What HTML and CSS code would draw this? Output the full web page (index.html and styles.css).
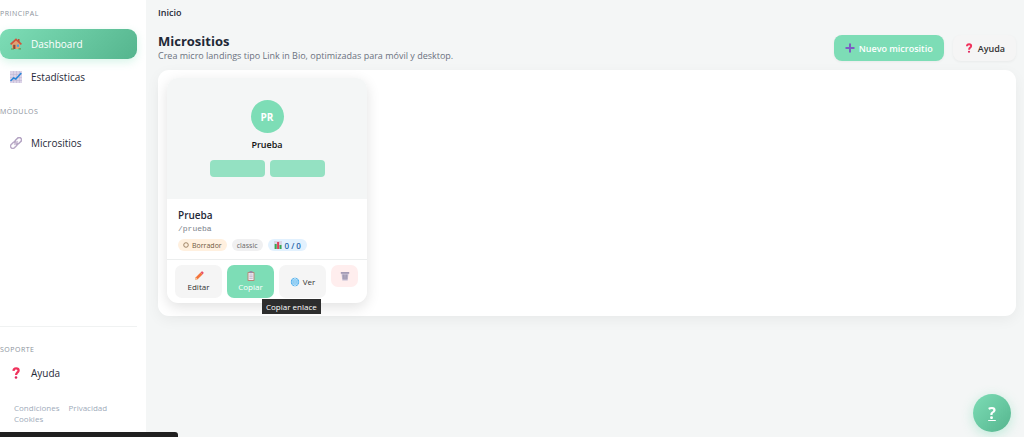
FILE: index.html
```html
<!DOCTYPE html>
<html lang="es">
<head>
    <meta charset="UTF-8">
    <meta name="viewport" content="width=device-width, initial-scale=1.0">
    <title>Micrositios</title>
    <link rel="stylesheet" href="styles.css">
</head>
<body>
    <svg class="sprite" aria-hidden="true">
        <symbol id="icon-question" viewBox="0 0 12 12">
            <path d="M3.500 3.900C3.600 2.100 4.700 1.400 6.100 1.400c1.500 0 2.500.8 2.500 2.100C8.600 5.500 6.100 5.500 6.100 8" fill="none" stroke="#f0325c" stroke-width="2.300"/>
            <circle cx="6" cy="10.500" r="1.300" fill="#e0245e"/>
        </symbol>
    </svg>

    <div class="layout">
        <aside class="sidebar">
            <nav class="nav-main">
                <p class="nav-title">PRINCIPAL</p>
                <a href="#" class="nav-item active">
                    <svg class="icon" viewBox="0 0 12 12" aria-hidden="true">
                        <path d="M2 5.500 6 2l4 3.500V11H2z" fill="#e0a372"/>
                        <path d="M8 1h1.500v3H8z" fill="#b5533c"/>
                        <path d="M.6 6.300 6 1.300l5.400 5" fill="none" stroke="#d2513a" stroke-width="1.600"/>
                        <path d="M3.200 6.800h2.200V11H3.200z" fill="#8a4b38"/>
                        <path d="M6.800 6.600h2.200v2.200H6.800z" fill="#3fa4e8"/>
                        <path d="M1 10.500h3v1H1zM8.500 10.200H11v1.300H8.500z" fill="#5c9e52"/>
                    </svg>
                    Dashboard
                </a>
                <a href="#" class="nav-item">
                    <svg class="icon" viewBox="0 0 12 12" aria-hidden="true">
                        <path d="M0 0h12v12H0z" fill="#dcd3e8"/>
                        <path d="M0 3.500h12M0 6.500h12M0 9.500h12M3.500 0v12M6.500 0v12M9.500 0v12" stroke="#bdb2d0" stroke-width=".5"/>
                        <path d="M.5 10 3.500 7l2.300 1L11.300 2" fill="none" stroke="#2886d8" stroke-width="1.500"/>
                    </svg>
                    Estadísticas
                </a>
                <p class="nav-title nav-title-modules">MÓDULOS</p>
                <a href="#" class="nav-item">
                    <svg class="icon" viewBox="0 0 12 12" aria-hidden="true">
                        <g fill="none" stroke-width="1.500" transform="rotate(-45 6 6)">
                            <rect x="-.8" y="3.700" width="7.500" height="4.600" rx="2.300" stroke="#b9a9c6"/>
                            <rect x="5.300" y="3.700" width="7.500" height="4.600" rx="2.300" stroke="#b3a3c2"/>
                            <path d="M3.500 6h5" stroke="#cdbfd6"/>
                        </g>
                    </svg>
                    Micrositios
                </a>
            </nav>
            <div class="nav-support">
                <p class="nav-title">SOPORTE</p>
                <a href="#" class="nav-item">
                    <svg class="icon" aria-hidden="true"><use href="#icon-question"/></svg>
                    Ayuda
                </a>
                <div class="legal">
                    <a href="#">Condiciones</a>
                    <a href="#">Privacidad</a>
                    <a href="#">Cookies</a>
                </div>
            </div>
        </aside>

        <main class="content">
            <div class="breadcrumb">Inicio</div>
            <header class="page-header">
                <div>
                    <h1>Micrositios</h1>
                    <p class="subtitle">Crea micro landings tipo Link in Bio, optimizadas para móvil y desktop.</p>
                </div>
                <div class="header-actions">
                    <button type="button" class="btn btn-primary">
                        <svg class="icon-sm" viewBox="0 0 10 10" aria-hidden="true">
                            <path d="M5 .5v9M.5 5h9" stroke="#7c5cc4" stroke-width="2"/>
                        </svg>
                        Nuevo micrositio
                    </button>
                    <button type="button" class="btn btn-light">
                        <svg class="icon-sm" aria-hidden="true"><use href="#icon-question"/></svg>
                        Ayuda
                    </button>
                </div>
            </header>

            <section class="panel">
                <article class="site-card">
                    <div class="preview">
                        <div class="avatar">PR</div>
                        <div class="preview-name">Prueba</div>
                        <div class="preview-links">
                            <span></span>
                            <span></span>
                        </div>
                    </div>
                    <div class="info">
                        <h2>Prueba</h2>
                        <div class="slug">/prueba</div>
                        <div class="badges">
                            <span class="badge badge-draft">
                                <svg class="icon-dot" viewBox="0 0 6 6" aria-hidden="true"><circle cx="3" cy="3" r="2.300" fill="none" stroke="#8a6d4d" stroke-width=".8"/></svg>
                                Borrador
                            </span>
                            <span class="badge badge-theme">classic</span>
                            <span class="badge badge-stats">
                                <svg class="icon-xs" viewBox="0 0 8 8" aria-hidden="true">
                                    <path d="M0 0h8v8H0z" fill="#d9d6e6"/>
                                    <path d="M.7 3h2v5h-2z" fill="#35a853"/>
                                    <path d="M3.100 1h2v7h-2z" fill="#e0405a"/>
                                    <path d="M5.500 4h2v4h-2z" fill="#35a853"/>
                                </svg>
                                0 / 0
                            </span>
                        </div>
                    </div>
                    <div class="actions">
                        <button type="button" class="action">
                            <svg class="icon-sm" viewBox="0 0 10 10" aria-hidden="true">
                                <path d="m1 9 .8-2.700L6.600 1.500l1.900 1.900-4.800 4.800z" fill="#f4743b"/>
                                <path d="m6.600 1.500 1-1q.6-.4 1.200.2l.6.600q.4.600 0 1.100l-.9 1z" fill="#e8506a"/>
                                <path d="m1 9 .8-2.700 1.900 1.900z" fill="#f3cfa5"/>
                            </svg>
                            Editar
                        </button>
                        <div class="tooltip-wrap">
                            <button type="button" class="action action-copy" aria-describedby="copy-tip">
                                <svg class="icon-sm" viewBox="0 0 10 10" aria-hidden="true">
                                    <rect x="1.500" y="1" width="7" height="9" rx=".8" fill="#b58a78"/>
                                    <path d="M2.500 2h5v7h-5z" fill="#f3eef7"/>
                                    <path d="M3.500 0h3v2.200h-3z" fill="#958da6"/>
                                    <path d="M3.300 4h3.400M3.300 5.700h3.400M3.300 7.400h3.400" stroke="#a99fb8" stroke-width=".7"/>
                                </svg>
                                Copiar
                            </button>
                            <span id="copy-tip" class="tooltip" role="tooltip">Copiar enlace</span>
                        </div>
                        <button type="button" class="action action-view">
                            <svg class="icon-sm" viewBox="0 0 10 10" aria-hidden="true">
                                <circle cx="5" cy="5" r="4.200" fill="#2f9fe8"/>
                                <path d="M1 5h8M5 1v8M1.700 3h6.600M1.700 7h6.600" stroke="#d3edfc" stroke-width=".8"/>
                                <ellipse cx="5" cy="5" rx="2.200" ry="3.900" fill="none" stroke="#d3edfc" stroke-width=".7"/>
                            </svg>
                            Ver
                        </button>
                        <button type="button" class="action-delete" aria-label="Eliminar">
                            <svg class="icon-sm" viewBox="0 0 10 10" aria-hidden="true">
                                <path d="M1.500 2.500h7L7.700 9.500H2.300z" fill="#c4bdd2"/>
                                <path d="M3.400 3.500l.4 5M5 3.500v5M6.600 3.500l-.4 5M2 5h6M2.200 7h5.600" stroke="#8f869f" stroke-width=".5"/>
                                <path d="M.8 1h8.400v1.800H.8z" fill="#a49bb5"/>
                            </svg>
                        </button>
                    </div>
                </article>
            </section>
        </main>
    </div>

    <a href="#" class="help-fab" aria-label="Ayuda">?</a>
    <div class="status-bar"></div>
</body>
</html>
```
FILE: styles.css
```css
:root {
    --green: #7dddb6;
    --green-dark: #55b58e;
    --bg: #f4f6f6;
    --text: #1f2937;
    --muted: #6b7280;
    --gradient: linear-gradient(135deg, var(--green), var(--green-dark));
}

* {
    box-sizing: border-box;
}

body {
    margin: 0;
    background: var(--bg);
    color: var(--text);
    font-family: "Open Sans", "Noto Sans", sans-serif;
    font-size: 9px;
    overflow: hidden;
}

h1, h2, p {
    margin: 0;
}

a {
    color: inherit;
    text-decoration: none;
}

button {
    border: 0;
    font: inherit;
    color: inherit;
    cursor: pointer;
}

svg {
    flex: none;
}

.sprite {
    position: absolute;
    width: 0;
    height: 0;
}

.icon {
    width: 12px;
    height: 12px;
}

.icon-sm {
    width: 10px;
    height: 10px;
}

.icon-xs {
    width: 8px;
    height: 8px;
}

.icon-dot {
    width: 6px;
    height: 6px;
}

.layout {
    display: flex;
    min-height: 100vh;
}

/* Sidebar */
.sidebar {
    width: 146px;
    flex: none;
    display: flex;
    flex-direction: column;
    justify-content: space-between;
    padding: 8px 9px 13px 0;
    background: #fff;
}

.nav-title {
    margin-bottom: 9px;
    color: #8b929c;
    font-size: 7px;
    line-height: 12px;
    letter-spacing: 0.5px;
}

.nav-title-modules {
    margin-top: 14px;
    margin-bottom: 10px;
}

.nav-item {
    display: flex;
    align-items: center;
    gap: 9px;
    height: 30px;
    margin-bottom: 3px;
    padding: 0 10px;
    border-radius: 9px;
    font-size: 10px;
}

.nav-item.active {
    background: var(--gradient);
    box-shadow: 0 3px 8px rgba(125, 221, 182, 0.3);
    color: #fff;
}

.nav-support {
    padding-top: 17px;
    border-top: 1px solid #f0f2f2;
}

.nav-support .nav-title {
    margin-bottom: 2px;
}

.legal {
    display: flex;
    flex-wrap: wrap;
    column-gap: 9px;
    margin-top: 14px;
    padding: 0 14px;
    color: #a0abba;
    font-size: 8px;
    line-height: 11px;
}

/* Content */
.content {
    flex: 1;
    padding: 6px 8px 0 12px;
}

.breadcrumb {
    font-weight: 600;
    line-height: 14px;
}

.page-header {
    display: flex;
    justify-content: space-between;
    align-items: center;
    margin: 14px 0 8px;
}

h1 {
    font-size: 13px;
    line-height: 15px;
}

.subtitle {
    color: var(--muted);
    line-height: 13px;
}

.header-actions {
    display: flex;
    gap: 9px;
}

.btn {
    display: flex;
    align-items: center;
    gap: 4px;
    height: 26px;
    padding: 0 11px;
    border-radius: 8px;
    box-shadow: 0 1px 3px rgba(0, 0, 0, 0.05);
    font-weight: 600;
}

.btn-primary {
    background: var(--green);
    color: #fff;
}

.btn-light {
    background: #f5f5f5;
    color: #333;
}

.panel {
    padding: 8px 9px 13px;
    border-radius: 11px;
    background: #fff;
    box-shadow: 0 4px 14px rgba(0, 0, 0, 0.05);
}

/* Microsite card */
.site-card {
    width: 200px;
    border-radius: 11px;
    background: #fff;
    box-shadow: 0 4px 14px rgba(0, 0, 0, 0.12);
}

.preview {
    display: flex;
    flex-direction: column;
    align-items: center;
    padding: 22px 0;
    border-radius: 11px 11px 0 0;
    background: var(--bg);
}

.avatar {
    display: flex;
    align-items: center;
    justify-content: center;
    width: 33px;
    height: 33px;
    border-radius: 50%;
    background: var(--green);
    color: #fff;
    font-size: 10px;
    font-weight: 700;
}

.preview-name {
    margin: 5px 0 8px;
    color: #111;
    font-weight: 600;
    line-height: 14px;
}

.preview-links {
    display: flex;
    gap: 5px;
}

.preview-links span {
    width: 55px;
    height: 17px;
    border-radius: 4px;
    background: #94e1c2;
}

.info {
    padding: 9px 11px 8px;
}

h2 {
    font-size: 10px;
    font-weight: 600;
    line-height: 14px;
}

.slug {
    margin-bottom: 4px;
    color: #7c828b;
    font-family: "Liberation Mono", monospace;
    font-size: 8px;
    line-height: 13px;
}

.badges {
    display: flex;
    gap: 5px;
}

.badge {
    display: flex;
    align-items: center;
    gap: 3px;
    height: 12px;
    padding: 0 5px;
    border-radius: 6px;
    font-size: 7px;
}

.badge-draft {
    background: #fff0df;
    color: #705a42;
}

.badge-theme {
    background: #f0f0f1;
    color: #666;
}

.badge-stats {
    padding: 0 6px;
    background: #e2f1fe;
    color: #2565a8;
    font-size: 8px;
    font-weight: 600;
}

.actions {
    display: flex;
    align-items: flex-start;
    gap: 5px;
    padding: 5px 8px;
    border-top: 1px solid #eceeee;
}

.action {
    display: flex;
    flex-direction: column;
    align-items: center;
    justify-content: center;
    width: 47px;
    height: 33px;
    padding: 0;
    border-radius: 7px;
    background: #f5f5f5;
    color: #333;
    font-size: 8px;
    line-height: 11px;
}

.action-copy {
    background: var(--green);
    color: #fff;
}

.action-view {
    flex-direction: row;
    gap: 3px;
}

.action-delete {
    display: flex;
    align-items: center;
    justify-content: center;
    width: 27px;
    height: 22px;
    padding: 0;
    border-radius: 7px;
    background: #ffeeee;
}

.tooltip-wrap {
    position: relative;
}

.tooltip {
    position: absolute;
    top: 34px;
    left: 35px;
    padding: 0 4px;
    background: #2d2d2d;
    color: #fff;
    font-size: 8px;
    line-height: 15px;
    white-space: nowrap;
}

/* Floating elements */
.help-fab {
    position: fixed;
    right: 13px;
    bottom: 5px;
    display: flex;
    align-items: center;
    justify-content: center;
    width: 38px;
    height: 38px;
    border-radius: 50%;
    background: var(--gradient);
    box-shadow: 0 3px 12px rgba(125, 221, 182, 0.45);
    color: #fff;
    font-size: 16px;
    font-weight: 700;
    text-decoration: underline;
}

.status-bar {
    position: fixed;
    left: 0;
    bottom: 0;
    width: 178px;
    height: 5px;
    border-radius: 0 3px 0 0;
    background: #202020;
}
```
